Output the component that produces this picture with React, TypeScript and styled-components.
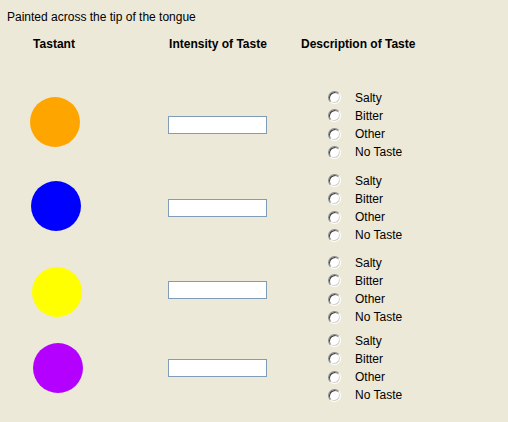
import React from "react";
import styled, { createGlobalStyle } from "styled-components";

const Global = createGlobalStyle`
  html, body { margin: 0; padding: 0; background: #ece9d8; }
  body { font-family: "Liberation Sans", Arial, sans-serif; font-size: 12px; color: #000; }
`;

const Page = styled.div`
  width: 508px;
  height: 422px;
  background: #ece9d8;
  padding-top: 10px;
  box-sizing: border-box;
`;

const Title = styled.div`
  padding-left: 7px;
  line-height: 14px;
`;

const Grid = styled.div`
  display: grid;
  grid-template-columns: 108px 193px 1fr;
`;

const HeaderRow = styled(Grid)`
  margin-top: 13px;
  line-height: 14px;
  font-weight: bold;
`;

const HeadCell = styled.div<{ $pad?: number; $align?: string }>`
  padding-left: ${(p) => p.$pad ?? 0}px;
  text-align: ${(p) => p.$align ?? "center"};
`;

const Body = styled.div`
  margin-top: 32px;
`;

const Row = styled(Grid)<{ $h: number }>`
  height: ${(p) => p.$h}px;
  align-items: center;
`;

const Cell = styled.div<{ $pad?: number }>`
  display: flex;
  justify-content: center;
  padding-left: ${(p) => p.$pad ?? 0}px;
`;

const Dot = styled.div<{ $color: string; $dx: number; $dy: number }>`
  width: 50px;
  height: 50px;
  border-radius: 50%;
  background: ${(p) => p.$color};
  transform: translate(${(p) => p.$dx}px, ${(p) => p.$dy}px);
`;

const TextBox = styled.input`
  width: 99px;
  height: 18px;
  box-sizing: border-box;
  border: 1px solid #7f9db9;
  background: #fff;
  margin: 0;
  padding: 1px 2px;
  font: inherit;
  outline: none;
`;

const Options = styled.div`
  display: flex;
  flex-direction: column;
  padding-left: 27px;
`;

const Option = styled.label`
  display: flex;
  align-items: center;
  height: 18.3px;
  gap: 14px;
  line-height: 14px;
`;

const Radio = styled.span`
  width: 13px;
  height: 13px;
  box-sizing: border-box;
  border-radius: 50%;
  border: 1px solid;
  border-color: #8a8a8a #ffffff #ffffff #8a8a8a;
  background: #fff;
  box-shadow: inset 1px 1px 0 #404040, inset -1px -1px 0 #d4d0c8;
  flex: none;
`;

const tastants = [
  { color: "#ffa500", h: 84, dx: 1, dy: -3 },
  { color: "#0000ff", h: 82, dx: 2, dy: -2 },
  { color: "#ffff00", h: 82, dx: 3, dy: 2 },
  { color: "#b400ff", h: 74, dx: 4, dy: 0 },
];

const labels = ["Salty", "Bitter", "Other", "No Taste"];

export default function App() {
  return (
    <Page>
      <Global />
      <Title>Painted across the tip of the tongue</Title>
      <HeaderRow>
        <HeadCell>Tastant</HeadCell>
        <HeadCell $pad={27}>Intensity of Taste</HeadCell>
        <HeadCell $align="left">Description of Taste</HeadCell>
      </HeaderRow>
      <Body>
        {tastants.map((t, i) => (
          <Row key={i} $h={t.h}>
            <Cell>
              <Dot $color={t.color} $dx={t.dx} $dy={t.dy} />
            </Cell>
            <Cell $pad={26}>
              <TextBox type="text" />
            </Cell>
            <Options>
              {labels.map((l) => (
                <Option key={l}>
                  <Radio />
                  {l}
                </Option>
              ))}
            </Options>
          </Row>
        ))}
      </Body>
    </Page>
  );
}
